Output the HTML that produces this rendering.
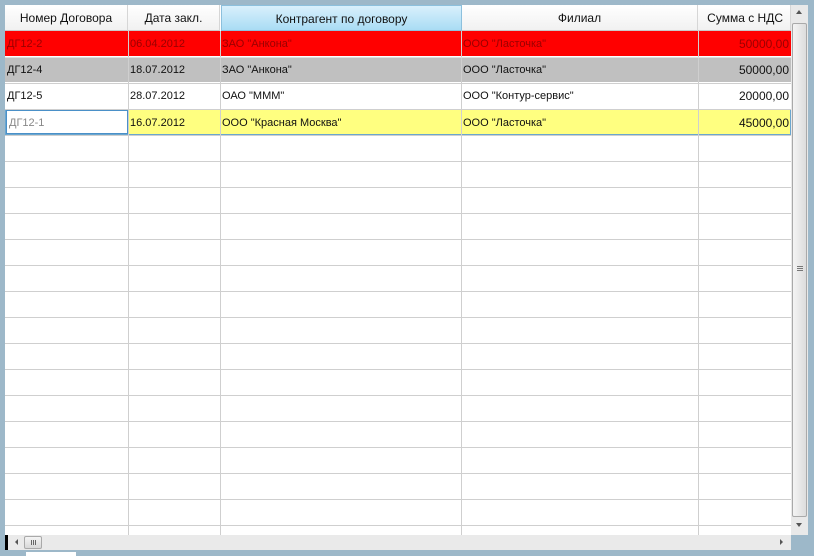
<!DOCTYPE html>
<html><head><meta charset="utf-8"><style>
*{margin:0;padding:0;box-sizing:border-box}
body{width:814px;height:556px;background:#9db8c9;position:relative;overflow:hidden;font-family:"Liberation Sans",Arial,sans-serif}
#g{position:absolute;left:5px;top:5px;width:786px;height:530px;background:#fff;overflow:hidden}
.h{position:absolute;top:0;height:26px;background:linear-gradient(#ffffff,#f1f1f1);border-right:1px solid #d6d6d6;border-bottom:1px solid #c9c9c9;font-size:12px;color:#111;text-align:center;line-height:26px}
.h.sel{background:linear-gradient(#d9f0fc,#a9dcf4);border:1px solid #8cc0dd;border-bottom-color:#8cc0dd}
.vl{position:absolute;top:26px;bottom:0;width:1px;background:#cfcfcf}
.hl{position:absolute;left:0;width:786px;height:1px;background:#cfcfcf}
.r{position:absolute;left:0;width:786px;height:25px}
.c{position:absolute;top:0;height:25px;line-height:27px;font-size:11px;color:#111;padding-left:2px;white-space:nowrap}
.red .c{color:#9a0000}
.num{text-align:right;padding-right:2px}
#vs{position:absolute;left:791px;top:5px;width:17px;height:530px;background:#e9e9e9}
#th{position:absolute;left:1px;top:18px;width:15px;height:494px;background:linear-gradient(90deg,#f4f4f4,#dcdcdc);border:1px solid #a9a9a9;border-radius:2px}
#hs{position:absolute;left:5px;top:535px;width:786px;height:15px;background:#eaeaea}
</style></head><body>
<div id="g">
<div class="h" style="left:0;width:123px">Номер Договора</div>
<div class="h" style="left:123px;width:92px">Дата закл.</div>
<div class="h sel" style="left:216px;width:241px">Контрагент по договору</div>
<div class="h" style="left:457px;width:236px">Филиал</div>
<div class="h" style="left:693px;width:93px;text-align:right;padding-right:7px">Сумма с НДС</div>

<div class="r red" style="top:26px;background:#ff0000"><div class="c" style="left:0">ДГ12-2</div><div class="c" style="left:123px">06.04.2012</div><div class="c" style="left:215px">ЗАО "Анкона"</div><div class="c" style="left:456px">ООО "Ласточка"</div><div class="c num" style="left:693px;width:93px;font-size:12px">50000,00</div></div>
<div class="r" style="top:52px;background:#c0c0c0"><div class="c" style="left:0">ДГ12-4</div><div class="c" style="left:123px">18.07.2012</div><div class="c" style="left:215px">ЗАО "Анкона"</div><div class="c" style="left:456px">ООО "Ласточка"</div><div class="c num" style="left:693px;width:93px;font-size:12px">50000,00</div></div>
<div class="r" style="top:78px"><div class="c" style="left:0">ДГ12-5</div><div class="c" style="left:123px">28.07.2012</div><div class="c" style="left:215px">ОАО "МММ"</div><div class="c" style="left:456px">ООО "Контур-сервис"</div><div class="c num" style="left:693px;width:93px;font-size:12px">20000,00</div></div>
<div class="r" style="top:104px;background:#ffff80;border:1px solid #6aa6cf;height:26px"><div class="c" style="left:0;width:122px;background:#fff;border:1px solid #4a90c8;color:#888;height:24px;line-height:24px">ДГ12-1</div><div class="c" style="left:122px">16.07.2012</div><div class="c" style="left:214px">ООО "Красная Москва"</div><div class="c" style="left:455px">ООО "Ласточка"</div><div class="c num" style="left:692px;width:93px;font-size:12px">45000,00</div></div>

<div class="vl" style="left:123px"></div><div class="vl" style="left:215px"></div><div class="vl" style="left:456px"></div><div class="vl" style="left:693px"></div>
<div class="hl" style="top:52px;background:#e0e0e0"></div><div class="hl" style="top:78px"></div><div class="hl" style="top:104px"></div>
<div class="hl" style="top:130px"></div><div class="hl" style="top:156px"></div><div class="hl" style="top:182px"></div><div class="hl" style="top:208px"></div><div class="hl" style="top:234px"></div><div class="hl" style="top:260px"></div><div class="hl" style="top:286px"></div><div class="hl" style="top:312px"></div><div class="hl" style="top:338px"></div><div class="hl" style="top:364px"></div><div class="hl" style="top:390px"></div><div class="hl" style="top:416px"></div><div class="hl" style="top:442px"></div><div class="hl" style="top:468px"></div><div class="hl" style="top:494px"></div><div class="hl" style="top:520px"></div>
</div>
<div id="vs"><div style="position:absolute;left:5px;top:5px;width:0;height:0;border-left:3px solid transparent;border-right:3px solid transparent;border-bottom:4px solid #555"></div><div id="th"><div style="position:absolute;left:4px;top:242px;width:6px;height:1px;background:#777;box-shadow:0 2px #777,0 4px #777"></div></div><div style="position:absolute;left:5px;top:518px;width:0;height:0;border-left:3px solid transparent;border-right:3px solid transparent;border-top:4px solid #555"></div></div>
<div id="hs"><div style="position:absolute;left:0;top:0;width:3px;height:15px;background:#000"></div><div style="position:absolute;left:10px;top:4px;border-top:3px solid transparent;border-bottom:3px solid transparent;border-right:3px solid #555"></div><div style="position:absolute;left:19px;top:1px;width:18px;height:13px;background:linear-gradient(#f4f4f4,#d8d8d8);border:1px solid #a9a9a9;border-radius:2px"><div style="position:absolute;left:6px;top:3px;width:1px;height:5px;background:#666;box-shadow:2px 0 #666,4px 0 #666"></div></div><div style="position:absolute;top:4px;border-top:3px solid transparent;border-bottom:3px solid transparent;border-left:3px solid #555;left:775px"></div></div>
<div style="position:absolute;left:26px;top:552px;width:50px;height:4px;background:#fff"></div>
</body></html>
